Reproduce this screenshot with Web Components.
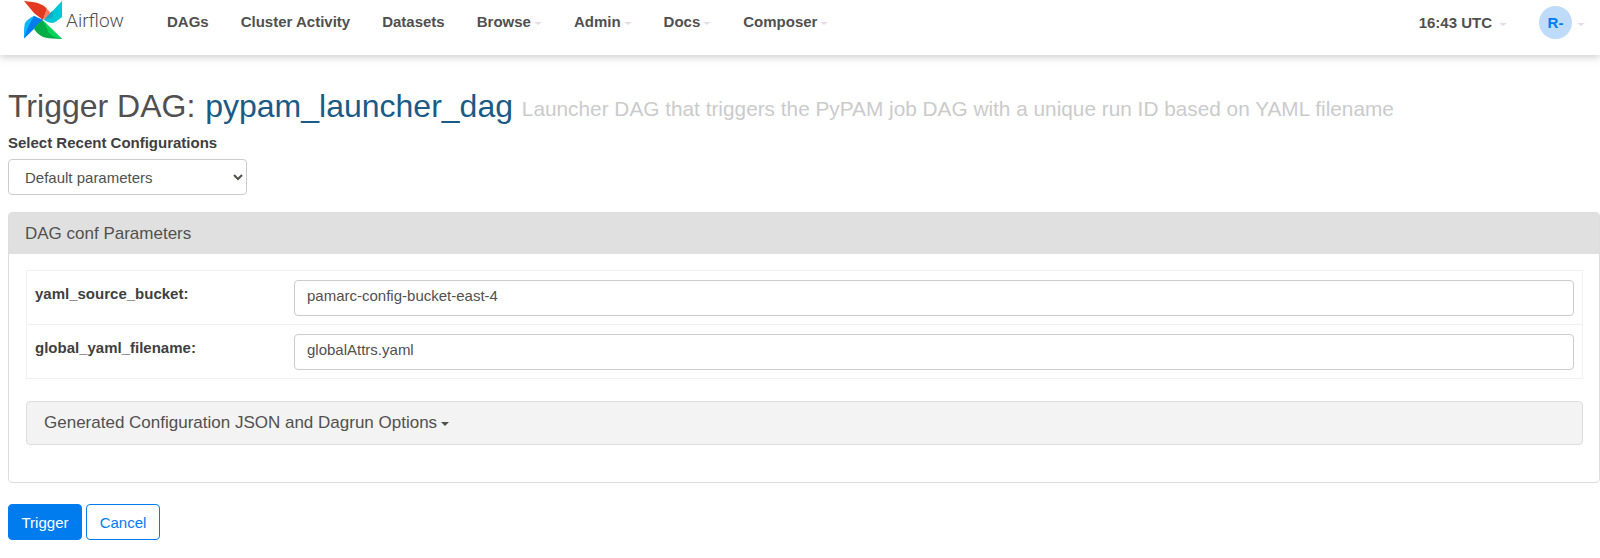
<!DOCTYPE html>
<html lang="en">
<head>
<meta charset="utf-8">
<title>Trigger DAG</title>
<style>
  html, body { margin: 0; background: #fff; }
  body { font-family: "Liberation Sans", Arial, sans-serif; color: #51504f; }
</style>
</head>
<body>
<airflow-navbar></airflow-navbar>
<trigger-page>
  <page-title slot="title" dag="pypam_launcher_dag" description="Launcher DAG that triggers the PyPAM job DAG with a unique run ID based on YAML filename"></page-title>
  <conf-panel heading="DAG conf Parameters">
    <param-row name="yaml_source_bucket:" value="pamarc-config-bucket-east-4"></param-row>
    <param-row name="global_yaml_filename:" value="globalAttrs.yaml"></param-row>
  </conf-panel>
</trigger-page>

<script>
class AirflowNavbar extends HTMLElement {
  constructor() {
    super();
    this.attachShadow({ mode: 'open' });
    const links = [['DAGs'], ['Cluster Activity'], ['Datasets'], ['Browse', 1], ['Admin', 1], ['Docs', 1], ['Composer', 1]];
    this.shadowRoot.innerHTML = /*html*/`
      <style>
        :host {
          display: flex;
          align-items: flex-start;
          height: 55px;
          background: #fff;
          box-shadow: 0 2px 8px rgba(0, 0, 0, 0.2);
          font-size: 15px;
          font-weight: 700;
          color: #51504f;
          position: relative;
        }
        .brand { display: flex; align-items: flex-start; margin-left: 24px; width: 127px; flex: none; }
        .brand svg { display: block; flex: none; }
        .brand span {
          font-family: Roboto, sans-serif;
          font-weight: 300;
          font-size: 19px;
          color: #51504f;
          margin: 10px 0 0 4px;
          line-height: 21px;
        }
        .links { display: flex; padding-top: 13px; }
        .links a { display: flex; align-items: center; padding: 0 16px; line-height: 17px; }
        .caret {
          width: 0; height: 0; margin-left: 3px; margin-top: 3px;
          border-left: 4px solid transparent;
          border-right: 4px solid transparent;
          border-top: 3px solid #e8dcea;
        }
        .right { margin-left: auto; display: flex; align-items: center; height: 45px; }
        .time { display: flex; align-items: center; line-height: 17px; }
        .time .caret { margin-left: 7px; }
        .avatar {
          display: flex; align-items: center; justify-content: center;
          width: 33px; height: 33px; border-radius: 50%;
          background: #bedcfa; color: #017cee; font-size: 15px;
          margin-left: 32px;
        }
        .user-caret { margin: 3px 15px 0 5px; }
      </style>
      <div class="brand">
        <svg width="38" height="39" viewBox="24 0 38 39" aria-hidden="true">
          <path fill="#e43921" d="M24 1 C30 1.500 35 2 39 3.500 C43 5 45.500 7 47 9 L43 20 L34 13 Z"/>
          <path fill="#f37b60" d="M47 9 C49 10.500 50.300 12.500 51 14.500 L43 20 Z"/>
          <path fill="#00c7d4" d="M62 1 L62 17 C59 19.500 56 22 53 23 C50 23 47 22 44 20 Z"/>
          <path fill="#11a9c4" d="M52 11 L44 20 L53 17 Z"/>
          <path fill="#0cb6ff" d="M24 38.500 C23.800 33 24 27 25 23 C27 20 30.500 17.500 34 16 L43 20 Z"/>
          <path fill="#017cee" d="M24 38.500 C26 31 30 23 34 16 L43 20 Z"/>
          <path fill="#00ad46" d="M62 39 C55 38.800 48 38.500 43 37 C39 35 36 32 34 29 C36 25 39 22.500 43 20.500 Z"/>
          <path fill="#04d659" d="M62 39 L43 20.500 L49 33 C53 37 57.500 38.500 62 39 Z"/>
        </svg>
        <span>Airflow</span>
      </div>
      <nav class="links">
        ${links.map(([t, c]) => `<a>${t}${c ? '<i class="caret"></i>' : ''}</a>`).join('')}
      </nav>
      <div class="right">
        <div class="time">16:43 UTC<i class="caret"></i></div>
        <div class="avatar">R-</div>
        <i class="caret user-caret"></i>
      </div>
    `;
  }
}

class PageTitle extends HTMLElement {
  constructor() {
    super();
    this.attachShadow({ mode: 'open' });
    this.shadowRoot.innerHTML = /*html*/`
      <style>
        :host { display: block; white-space: nowrap; line-height: 36px; font-size: 32px; color: #51504f; }
        a { color: #1a5b86; margin-left: 1px; }
        small { font-size: 20.8px; color: #cbcbcb; vertical-align: 1px; }
      </style>
      Trigger DAG: <a></a> <small></small>
    `;
  }
  connectedCallback() {
    this.shadowRoot.querySelector('a').textContent = this.getAttribute('dag');
    this.shadowRoot.querySelector('small').textContent = this.getAttribute('description');
  }
}

class ParamRow extends HTMLElement {
  constructor() {
    super();
    this.attachShadow({ mode: 'open' });
    this.shadowRoot.innerHTML = /*html*/`
      <style>
        :host {
          display: grid;
          grid-template-columns: 267px 1fr;
          padding: 9px 8px 8px 0;
          border-top: 1px solid #f1f1f1;
          font-size: 15px;
          color: #51504f;
        }
        :host(:first-child) { border-top: 0; }
        label { font-weight: 700; font-size: 15px; padding: 4px 0 0 8px; color: #3f3f3f; line-height: 20px; }
        input {
          box-sizing: border-box;
          width: 100%;
          height: 36px;
          padding: 0 12px 6px;
          border: 1px solid #ccc;
          border-radius: 4px;
          font: 15px "Liberation Sans", Arial, sans-serif;
          color: #51504f;
          background: #fff;
          outline: none;
        }
      </style>
      <label></label>
      <input type="text">
    `;
  }
  connectedCallback() {
    this.shadowRoot.querySelector('label').textContent = this.getAttribute('name');
    this.shadowRoot.querySelector('input').value = this.getAttribute('value');
  }
}

class ConfPanel extends HTMLElement {
  constructor() {
    super();
    this.attachShadow({ mode: 'open' });
    this.shadowRoot.innerHTML = /*html*/`
      <style>
        :host {
          display: block;
          border: 1px solid #ddd;
          border-radius: 4px;
          background: #fff;
        }
        .head {
          background: #e0e0e0;
          height: 41px;
          line-height: 41px;
          padding-left: 16px;
          font-size: 17px;
          color: #51504f;
        }
        .body { padding: 16px 16px 37px 17px; }
        .rows { border: 1px solid #f1f1f1; }
        .accordion {
          margin-top: 22px;
          height: 42px;
          line-height: 42px;
          padding-left: 17px;
          background: #f3f3f3;
          border: 1px solid #ddd;
          border-radius: 4px;
          font-size: 17px;
          color: #51504f;
          display: flex;
          align-items: center;
        }
        .caret {
          width: 0; height: 0; margin-left: 4px; margin-top: 2px;
          border-left: 4px solid transparent;
          border-right: 4px solid transparent;
          border-top: 4px solid #51504f;
        }
      </style>
      <div class="head"></div>
      <div class="body">
        <div class="rows"><slot></slot></div>
        <div class="accordion">Generated Configuration JSON and Dagrun Options<i class="caret"></i></div>
      </div>
    `;
  }
  connectedCallback() {
    this.shadowRoot.querySelector('.head').textContent = this.getAttribute('heading');
  }
}

class TriggerPage extends HTMLElement {
  constructor() {
    super();
    this.attachShadow({ mode: 'open' });
    this.shadowRoot.innerHTML = /*html*/`
      <style>
        :host { display: block; padding: 33px 0 0 8px; font-family: "Liberation Sans", Arial, sans-serif; }
        .recent { margin-top: 6px; }
        label { display: block; font-weight: 700; font-size: 15px; line-height: 20px; color: #3f3f3f; }
        select {
          display: block;
          box-sizing: border-box;
          width: 239px;
          height: 36px;
          margin-top: 6px;
          padding: 0 12px;
          border: 1px solid #ccc;
          border-radius: 4px;
          background: #fff;
          color: #51504f;
          font: 15px "Liberation Sans", Arial, sans-serif;
          outline: none;
        }
        .panel-wrap { margin-top: 17px; }
        .actions { display: flex; gap: 4px; margin-top: 21px; }
        button {
          box-sizing: border-box;
          width: 74px;
          height: 36px;
          border: 1px solid #017cee;
          border-radius: 4px;
          font: 15px "Liberation Sans", Arial, sans-serif;
          padding: 0;
        }
        .primary { background: #017cee; color: #fff; }
        .outline { background: #fff; color: #017cee; }
      </style>
      <slot name="title"></slot>
      <div class="recent">
        <label>Select Recent Configurations</label>
        <select><option>Default parameters</option></select>
      </div>
      <div class="panel-wrap"><slot></slot></div>
      <div class="actions">
        <button class="primary">Trigger</button>
        <button class="outline">Cancel</button>
      </div>
    `;
  }
}

customElements.define('airflow-navbar', AirflowNavbar);
customElements.define('page-title', PageTitle);
customElements.define('param-row', ParamRow);
customElements.define('conf-panel', ConfPanel);
customElements.define('trigger-page', TriggerPage);
</script>
</body>
</html>
